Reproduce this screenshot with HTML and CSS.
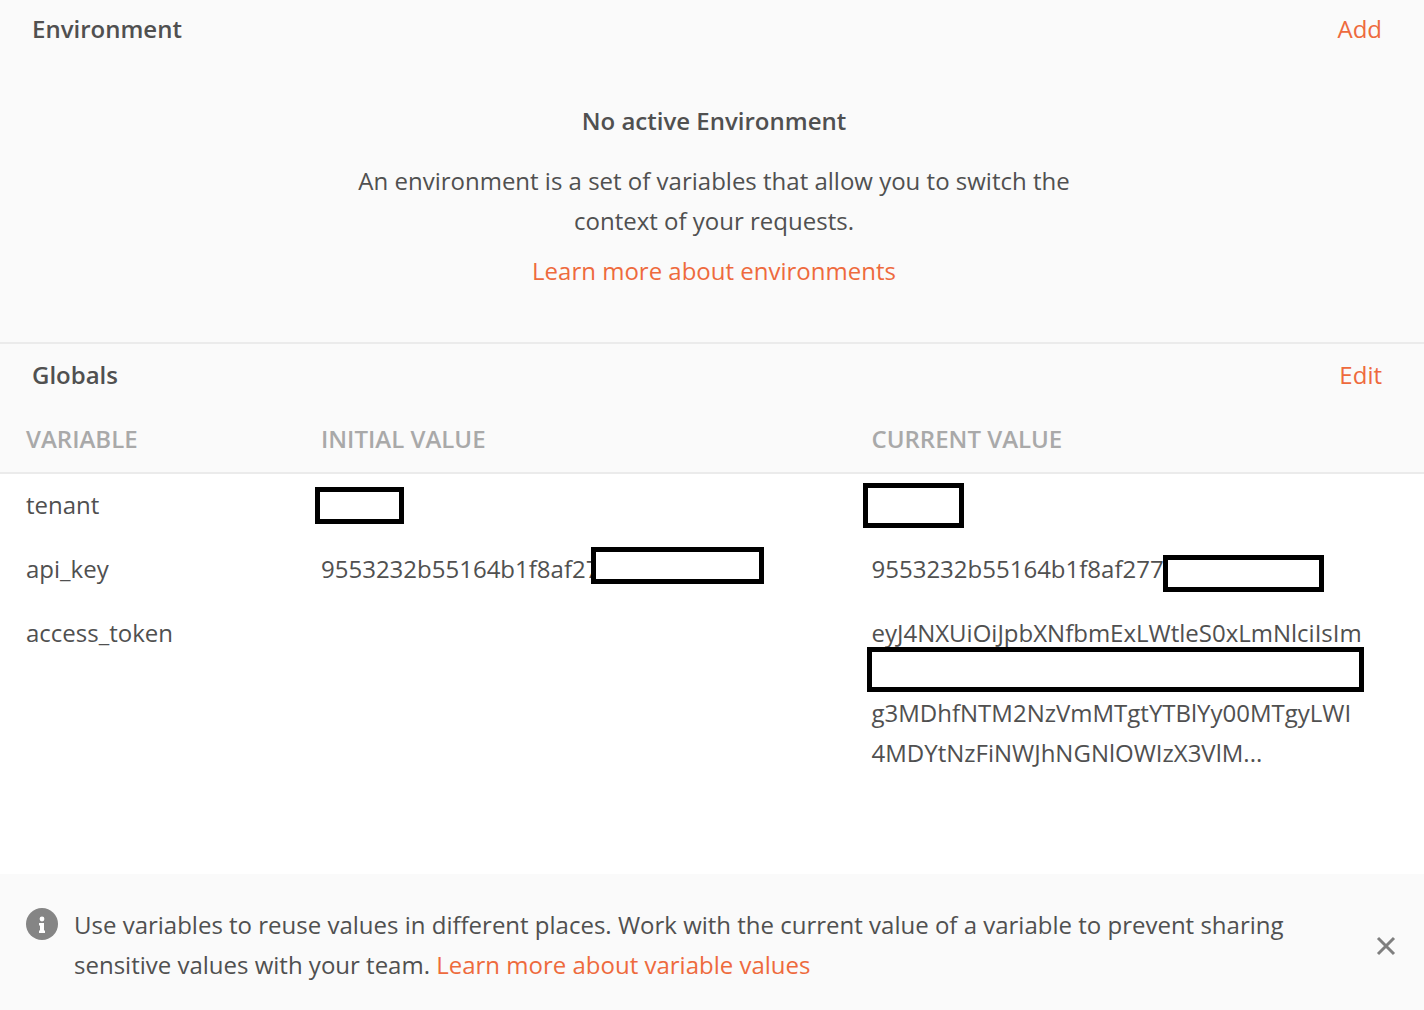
FILE: index.html
```html
<!DOCTYPE html>
<html lang="en">
<head>
  <meta charset="UTF-8">
  <title>Environment quick look</title>
  <link rel="stylesheet" href="styles.css">
</head>
<body>

  <section class="env">
    <div class="section-head">
      <h2>Environment</h2>
      <a href="#">Add</a>
    </div>
    <div class="env-empty">
      <h3>No active Environment</h3>
      <p>An environment is a set of variables that allow you to switch the<br>context of your requests.</p>
      <a href="#">Learn more about environments</a>
    </div>
  </section>

  <section class="globals">
    <div class="section-head globals-head">
      <h2>Globals</h2>
      <a href="#">Edit</a>
    </div>
    <div class="row table-head">
      <div class="col-var">VARIABLE</div>
      <div class="col-init">INITIAL VALUE</div>
      <div class="col-cur">CURRENT VALUE</div>
    </div>
    <div class="table-body">
      <div class="row">
        <div class="col-var">tenant</div>
        <div class="col-init">
          <span class="redact redact-a"></span>
        </div>
        <div class="col-cur">
          <span class="redact redact-b"></span>
        </div>
      </div>
      <div class="row">
        <div class="col-var">api_key</div>
        <div class="col-init">
          9553232b55164b1f8af277
          <span class="redact redact-c"></span>
        </div>
        <div class="col-cur">
          9553232b55164b1f8af277
          <span class="redact redact-d"></span>
        </div>
      </div>
      <div class="row">
        <div class="col-var">access_token</div>
        <div class="col-init"></div>
        <div class="col-cur">
          eyJ4NXUiOiJpbXNfbmExLWtleS0xLmNlciIsIm<br>
          &nbsp;<br>
          g3MDhfNTM2NzVmMTgtYTBlYy00MTgyLWI<br>
          4MDYtNzFiNWJhNGNlOWIzX3VlM...
          <span class="redact redact-e"></span>
        </div>
      </div>
    </div>
  </section>

  <div class="banner">
    <svg class="info-icon" viewBox="0 0 32 32" width="32" height="32">
      <circle cx="16" cy="16" r="16" fill="#858585"/>
      <circle cx="16" cy="11" r="2.4" fill="#fff"/>
      <path d="M13 15h5v7.5h1v2.5h-6v-2.5h1v-5h-1z" fill="#fff"/>
    </svg>
    <p>Use variables to reuse values in different places. Work with the current value of a variable to prevent sharing<br>sensitive values with your team. <a href="#">Learn more about variable values</a></p>
    <svg class="close-icon" viewBox="0 0 20 20" width="20" height="20">
      <path d="M2 2l16 16M18 2L2 18" stroke="#7f7f7f" stroke-width="3" fill="none"/>
    </svg>
  </div>

</body>
</html>
```

FILE: styles.css
```css
* {
  box-sizing: border-box;
}

html,
body {
  height: 100%;
}

body {
  margin: 0;
  height: 1010px;
  overflow: hidden;
  display: flex;
  flex-direction: column;
  font-family: "Open Sans", sans-serif;
  font-size: 24px;
  line-height: 40px;
  color: #505050;
  background: #fff;
}

a {
  color: #ee6a3d;
  text-decoration: none;
}

h2,
h3 {
  margin: 0;
  font-size: 24px;
  font-weight: 600;
}

.section-head {
  display: flex;
  justify-content: space-between;
  padding: 9px 42px 11px 32px;
}

.env {
  height: 344px;
  background: #fafafa;
  border-bottom: 2px solid #ebebeb;
}

.env-empty {
  padding: 41px 0 0 4px;
  text-align: center;
}

.env-empty p {
  margin: 20px 0 10px;
}

.globals {
  flex: 1;
}

.globals-head {
  padding-top: 11px;
  padding-bottom: 13px;
  background: #fafafa;
}

.row {
  display: flex;
  padding: 12px 0;
}

.table-body .row:first-child {
  padding-top: 11px;
}

.table-head {
  height: 66px;
  background: #fafafa;
  border-bottom: 2px solid #ebebeb;
  padding: 11px 0 0;
  font-weight: 600;
  color: #a9a9a9;
}

.col-var {
  width: 321px;
  padding-left: 26px;
  flex-shrink: 0;
}

.col-init {
  width: 550.5px;
  flex-shrink: 0;
  position: relative;
}

.col-cur {
  flex: 1;
  position: relative;
}

.table-body .col-init,
.table-body .col-cur {
  min-height: 40px;
}

.redact {
  position: absolute;
  background: #fff;
  border: 5px solid #000;
}

.redact-a {
  left: -6px;
  top: 2px;
  width: 89px;
  height: 37px;
}

.redact-b {
  left: -8.5px;
  top: -2px;
  width: 101px;
  height: 45px;
}

.redact-c {
  left: 270px;
  top: -2px;
  width: 173px;
  height: 37px;
}

.redact-d {
  left: 291.5px;
  top: 6px;
  width: 161px;
  height: 37px;
}

.redact-e {
  left: -4.5px;
  top: 34px;
  width: 497px;
  height: 45px;
}

.banner {
  height: 136px;
  flex-shrink: 0;
  display: flex;
  align-items: flex-start;
  position: relative;
  padding: 31px 26px 0;
  background: #fafafa;
}

.banner p {
  margin: 0;
  padding-left: 16px;
}

.info-icon {
  flex-shrink: 0;
  margin-top: 3px;
}

.close-icon {
  position: absolute;
  left: 1376px;
  top: 62px;
}
```
